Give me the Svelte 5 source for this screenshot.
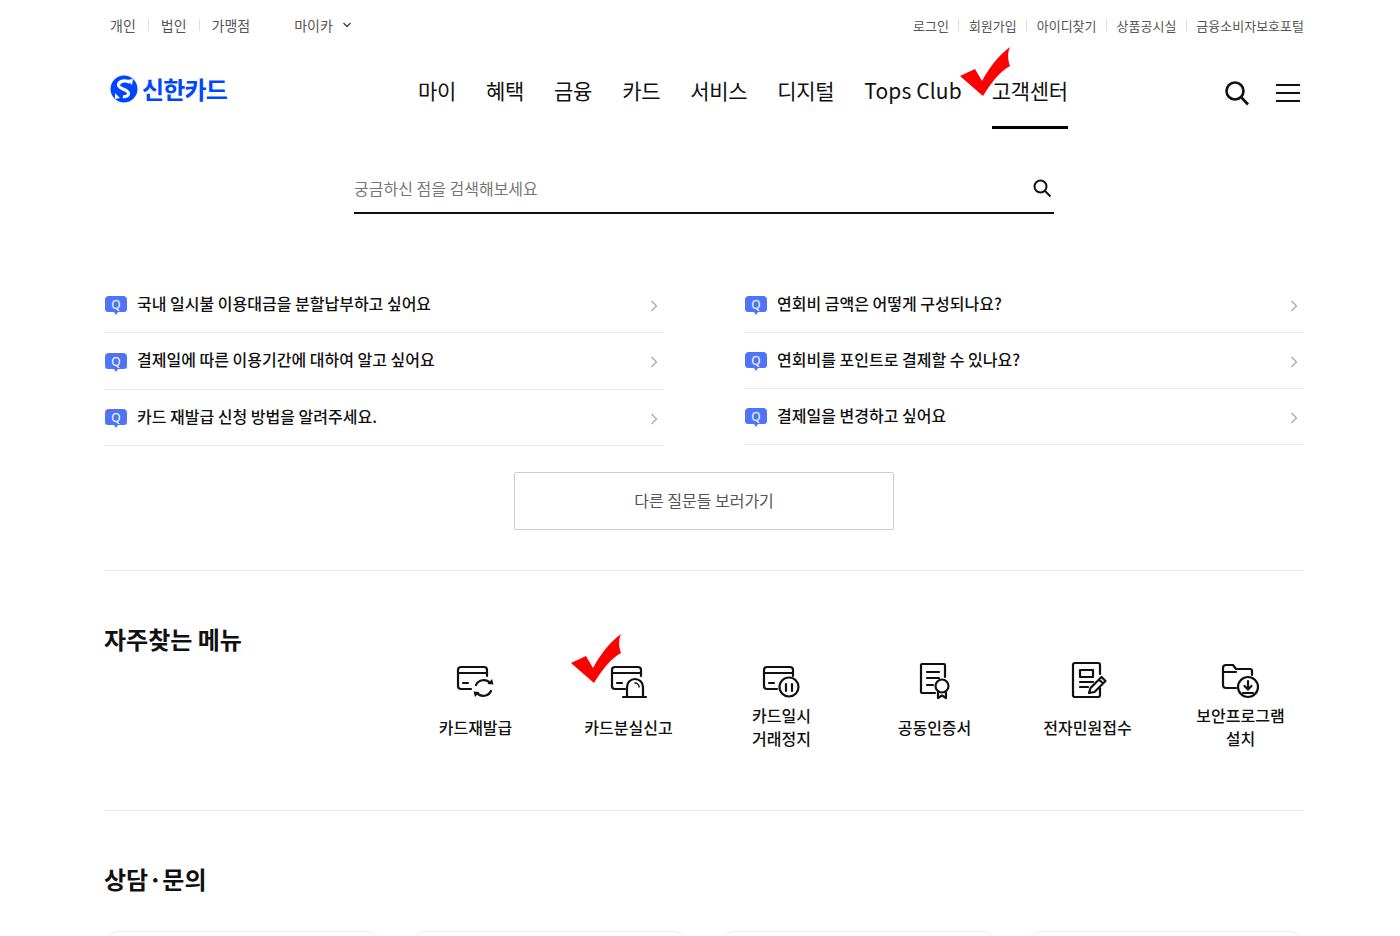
<script>
  const nav = ['마이', '혜택', '금융', '카드', '서비스', '디지털', 'Tops Club', '고객센터'];
  const util = ['로그인', '회원가입', '아이디찾기', '상품공시실', '금융소비자보호포털'];
  const left = ['국내 일시불 이용대금을 분할납부하고 싶어요', '결제일에 따른 이용기간에 대하여 알고 싶어요', '카드 재발급 신청 방법을 알려주세요.'];
  const right = ['연회비 금액은 어떻게 구성되나요?', '연회비를 포인트로 결제할 수 있나요?', '결제일을 변경하고 싶어요'];
  const menu = [
    { id: 'reissue', l: ['카드재발급'] },
    { id: 'lost', l: ['카드분실신고'] },
    { id: 'pause', l: ['카드일시', '거래정지'] },
    { id: 'cert', l: ['공동인증서'] },
    { id: 'doc', l: ['전자민원접수'] },
    { id: 'sec', l: ['보안프로그램', '설치'] }
  ];
</script>

{#snippet check()}
  <svg class="check" width="52" height="52" viewBox="0 0 52 52"><path fill="#f00" d="M0 30 L15 23 L22 35 C29 22 38 10 50 1 C47 8 48 14 50 20 C39 26 31 37 23 50 Z"/></svg>
{/snippet}

{#snippet card()}
  <path d="M15 29H5a3 3 0 0 1-3-3V10a3 3 0 0 1 3-3h23a3 3 0 0 1 3 3v6M2 13h29M7 23h5"/>
{/snippet}

{#snippet faq(items, cls)}
  <ul class="faq {cls}">
    {#each items as t}
      <li>
        <svg class="q" width="24" height="21" viewBox="0 0 24 21"><path fill="#4f74f5" d="M5 1h14a4 4 0 0 1 4 4v9a3 3 0 0 1-3 3h-6l-2 3-2-3H4a3 3 0 0 1-3-3V5a4 4 0 0 1 4-4z"/><text x="12" y="13.500" text-anchor="middle" fill="#fff" class="qt">Q</text></svg>
        <span>{t}</span>
        <svg class="chev" width="8" height="12" viewBox="0 0 8 12"><path d="M1.500 1l5 5-5 5" fill="none" stroke="#aaa" stroke-width="1.300"/></svg>
      </li>
    {/each}
  </ul>
{/snippet}

<div class="page">
  <div class="util">
    <div class="ul">
      <span>개인</span><i></i><span>법인</span><i></i><span>가맹점</span>
      <span class="my">마이카</span>
      <svg width="8" height="6" viewBox="0 0 8 6"><path d="M.5 1l3.500 3.500L7.500 1" fill="none" stroke="#444" stroke-width="1.300"/></svg>
    </div>
    <div class="ur">
      {#each util as u, i}
        {#if i}<i></i>{/if}<span>{u}</span>
      {/each}
    </div>
  </div>

  <header>
    <div class="logo">
      <svg width="28" height="28" viewBox="0 0 28 28">
        <circle cx="14" cy="14" r="13.500" fill="#0046ff"/>
        <path d="M20 7.500C15 4.500 9 6 8.500 10c-.5 4 10 4.500 10 8.500 0 2.500-3 3.500-5.500 3" fill="none" stroke="#fff" stroke-width="3.200"/>
        <path d="M17 5l6-1-1 6zM5 18l5 5-5 1z" fill="#fff"/>
      </svg>
      <span>신한카드</span>
    </div>
    <nav>
      {#each nav as n, i}
        <a class:on={i === 7} class:latin={i === 6}>{n}</a>
      {/each}
    </nav>
    <div class="tools">
      <svg width="26" height="26" viewBox="0 0 26 26" fill="none" stroke="#111" stroke-width="2.600"><circle cx="11" cy="11" r="8.500"/><path d="M17 17l7 7.500"/></svg>
      <svg width="24" height="20" viewBox="0 0 24 20" stroke="#111" stroke-width="2"><path d="M0 2h24M0 10h24M0 18h24"/></svg>
    </div>
    <div class="c1">{@render check()}</div>
  </header>

  <div class="search">
    <span>궁금하신 점을 검색해보세요</span>
    <svg width="20" height="20" viewBox="0 0 20 20" fill="none" stroke="#111" stroke-width="2"><circle cx="8.500" cy="8.500" r="6"/><path d="M13 13l5.500 5.500"/></svg>
  </div>

  <div class="faqs">
    {@render faq(left, 'l')}
    {@render faq(right, 'r')}
  </div>

  <div class="more"><a>다른 질문들 보러가기</a></div>

  <section class="freq">
    <h2>자주찾는 메뉴</h2>
    <div class="menu">
      {#each menu as m}
        <div class="item">
          <svg class="ic" width="40" height="40" viewBox="0 0 40 40" fill="none" stroke="#111" stroke-width="2.200" stroke-linejoin="round" stroke-linecap="round">
            {#if m.id === 'reissue'}
              {@render card()}
              <path d="M20 25a8.500 8.500 0 0 1 14-2M35 31a8.500 8.500 0 0 1-14 2"/><path fill="#111" stroke="none" d="M31.500 24l6 .5-1.500-5.500zM23.500 32l-6-.5 1.500 5.500z"/>
            {:else if m.id === 'lost'}
              <g transform="translate(1,0)">{@render card()}</g>
              <path d="M18 36v-9a8 8 0 0 1 16 0v9M14 37h23"/><path d="M30 27a4 4 0 0 0-4-4" stroke-width="1.500"/>
            {:else if m.id === 'pause'}
              {@render card()}
              <circle cx="27" cy="27" r="9.500" fill="#fff"/><path d="M24 24v7M30 24v7"/>
            {:else if m.id === 'cert'}
              <path d="M30 17V5a1 1 0 0 0-1-1H7a1 1 0 0 0-1 1v27a1 1 0 0 0 1 1h13"/><path d="M12 12h12M12 18h12M12 25h6"/>
              <circle cx="27" cy="26" r="6.500"/><path d="M23 31.500V38l4-2.500 4 2.500v-6.500"/>
            {:else if m.id === 'doc'}
              <path d="M32 14V5a2 2 0 0 0-2-2H7a2 2 0 0 0-2 2v30a2 2 0 0 0 2 2h23a2 2 0 0 0 2-2v-7"/><rect x="12" y="10" width="13" height="7"/><path d="M12 22h13M12 27h8"/>
              <path d="M21 33l1.500-5 11-11 4 4-11 11zM31 19.500l4 4"/>
            {:else}
              <path d="M15 28H5a3 3 0 0 1-3-3V8a3 3 0 0 1 3-3h7l3 4h14a2 2 0 0 1 2 2v4M2 12h13"/>
              <circle cx="27" cy="27" r="10"/><path d="M27 21v8M23.500 26l3.500 3.500 3.500-3.500M22 33h10"/>
            {/if}
          </svg>
          <div class="lab">{#each m.l as t}<div>{t}</div>{/each}</div>
          {#if m.id === 'lost'}<div class="c2">{@render check()}</div>{/if}
        </div>
      {/each}
    </div>
  </section>

  <section class="contact">
    <h2>상담·문의</h2>
    <div class="cards"><div></div><div></div><div></div><div></div></div>
  </section>
</div>

<style>
  :global(body) { margin: 0; background: #fff; overflow: hidden; }
  .page {
    width: 1200px; height: 936px; margin-left: 104px; overflow: hidden;
    font-family: "Noto Sans CJK KR", "Noto Sans", sans-serif; color: #111;
  }
  .util { display: flex; justify-content: space-between; align-items: center; height: 52px; font-size: 13px; color: #555; padding: 0 0 2px 6px; box-sizing: border-box; }
  .ul, .ur { display: flex; align-items: center; }
  .ul { font-size: 14px; }
  .util i { width: 1px; height: 12px; background: #ddd; margin: 0 12px; }
  .ur i { margin: 0 9.500px; }
  .my { margin-left: 44px; margin-right: 10px; }
  header { position: relative; display: flex; align-items: center; height: 77px; }
  .logo { display: flex; align-items: center; gap: 4px; color: #0046ff; font-size: 24px; font-weight: 700; letter-spacing: -0.8px; margin-left: 6px; margin-top: -4px; width: 308px; }
  nav { display: flex; gap: 30px; height: 77px; align-items: center; font-size: 21px; font-weight: 400; }
  nav a { position: relative; height: 77px; line-height: 76px; letter-spacing: -0.3px; white-space: nowrap; }
  nav a.latin { letter-spacing: 0.12px; }
  nav a.on::after { content: ""; position: absolute; left: 0; right: 0; bottom: 0; height: 3px; background: #000; }
  .tools { margin-left: auto; margin-right: 4px; display: flex; align-items: center; gap: 26px; margin-top: 4px; }
  .c1 { position: absolute; left: 856px; top: -6px; }
  .c2 { position: absolute; left: 19px; top: -27px; }
  .check { display: block; }
  .search { width: 700px; height: 55px; margin: 30px 0 0 250px; padding: 4px 2px 0 0; box-sizing: border-box; border-bottom: 2px solid #111; display: flex; justify-content: space-between; align-items: center; font-size: 16px; color: #777; }
  .faqs { display: flex; justify-content: space-between; margin-top: 63px; }
  .faq { list-style: none; margin: 0; padding: 0; width: 560px; }
  .faq li { display: flex; align-items: center; height: 56px; box-sizing: border-box; border-bottom: 1px solid #eaeaea; font-size: 16px; font-weight: 500; padding-bottom: 2px; }
  .faq.l li:nth-child(2) { height: 57px; }
  .faq span { margin: -2px 0 0 8px; }
  .q { flex: none; margin: 4px 1px 0 0; }
  .qt { font: 400 12px "Noto Sans", sans-serif; }
  .chev { margin-left: auto; margin-right: 6px; margin-top: 4px; }
  .more { margin-top: 26px; display: flex; justify-content: center; padding-bottom: 40px; border-bottom: 1px solid #eaeaea; }
  .more a { width: 380px; height: 58px; box-sizing: border-box; border: 1px solid #ccc; border-radius: 2px; padding-bottom: 2px; display: flex; align-items: center; justify-content: center; font-size: 16px; color: #555; }
  .freq { position: relative; height: 239px; border-bottom: 1px solid #eaeaea; }
  h2 { margin: 0; font-size: 24px; font-weight: 700; line-height: 36px; }
  .freq h2 { padding-top: 50px; }
  .menu { position: absolute; left: 295px; top: 89px; display: grid; grid-template-columns: repeat(6, 153px); }
  .item { position: relative; display: flex; flex-direction: column; align-items: center; }
  .lab { height: 46px; display: flex; flex-direction: column; justify-content: center; margin-top: 4px; font-size: 16px; font-weight: 500; line-height: 23px; text-align: center; }
  .contact h2 { padding-top: 50px; }
  .cards { display: grid; grid-template-columns: repeat(4, 277px); justify-content: space-between; margin-top: 34px; }
  .cards div { height: 60px; border: 1px solid #eee; border-radius: 14px; box-sizing: border-box; }
</style>
